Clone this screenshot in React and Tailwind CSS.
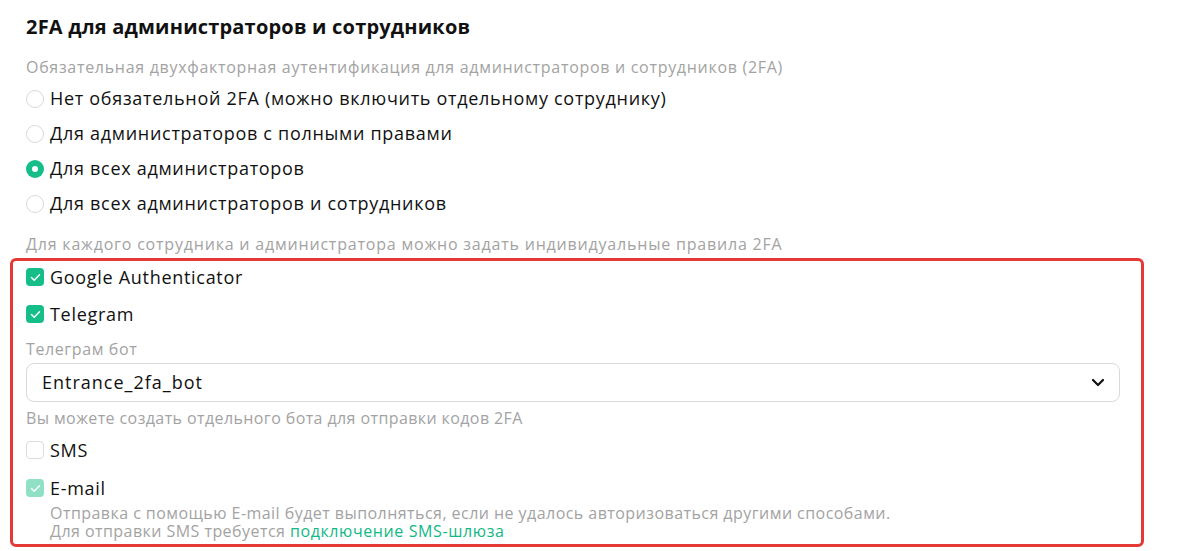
import React from "react";

const F = { fontFamily: '"Open Sans", "Noto Sans", sans-serif' };

function Radio({ checked, label }) {
  return (
    <label className="flex items-center h-[35px] gap-[6px]">
      {checked ? (
        <span className="w-[18px] h-[18px] rounded-full bg-[#15bd88] flex items-center justify-center">
          <span className="w-[6px] h-[6px] rounded-full bg-white" />
        </span>
      ) : (
        <span className="w-[18px] h-[18px] rounded-full border border-[#d9d9d9] bg-white" />
      )}
      <span className="text-[18px] tracking-[0.7px] text-[#111]">{label}</span>
    </label>
  );
}

function Check({ state, label }) {
  let box;
  if (state === "on" || state === "dim") {
    box = (
      <span
        className={
          "w-[18px] h-[18px] rounded-[4px] flex items-center justify-center " +
          (state === "on" ? "bg-[#15bd88]" : "bg-[#8fe0c4]")
        }
      >
        <svg width="11" height="9" viewBox="0 0 11 9" fill="none">
          <path d="M1.5 4.5L4.2 7.2L9.5 1.8" stroke="white" strokeWidth="1.5" strokeLinecap="round" strokeLinejoin="round" />
        </svg>
      </span>
    );
  } else {
    box = <span className="w-[18px] h-[18px] rounded-[4px] border border-[#dcdcdc] bg-white" />;
  }
  return (
    <label className="flex items-center gap-[6px]">
      {box}
      <span className="text-[18px] tracking-[0.7px] text-[#111]">{label}</span>
    </label>
  );
}

export default function App() {
  return (
    <div className="w-[1199px] h-[551px] bg-white overflow-hidden" style={F}>
      <div className="pl-[26px] pt-[13px]">
        <h1 className="text-[20px] tracking-[0.2px] font-bold text-[#111] leading-[28px]">
          2FA для администраторов и сотрудников
        </h1>
        <p className="mt-[15px] text-[16px] tracking-[0.7px] text-[#a3a3a3] leading-[22px]">
          Обязательная двухфакторная аутентификация для администраторов и сотрудников (2FA)
        </p>
        <div className="mt-[3px] flex flex-col">
          <Radio label="Нет обязательной 2FA (можно включить отдельному сотруднику)" />
          <Radio label="Для администраторов с полными правами" />
          <Radio checked label="Для всех администраторов" />
          <Radio label="Для всех администраторов и сотрудников" />
        </div>
        <p className="mt-[12px] text-[16px] tracking-[0.8px] text-[#a3a3a3] leading-[22px]">
          Для каждого сотрудника и администратора можно задать индивидуальные правила 2FA
        </p>
      </div>
      <div className="ml-[10px] mt-[3px] w-[1134px] h-[289px] border-[3px] border-[#e53935] rounded-[6px] pl-[13px] pr-[21px]">
        <div className="h-[32px] flex items-center">
          <Check state="on" label="Google Authenticator" />
        </div>
        <div className="h-[42px] flex items-center">
          <Check state="on" label="Telegram" />
        </div>
        <p className="mt-[2px] text-[16px] tracking-[0.6px] text-[#a3a3a3] leading-[24px]">Телеграм бот</p>
        <div className="mt-[2px] h-[39px] border border-[#d9d9d9] rounded-[8px] flex items-center justify-between pl-[15px] pr-[14px]">
          <span className="text-[18px] tracking-[1px] text-[#111]">Entrance_2fa_bot</span>
          <svg width="14" height="9" viewBox="0 0 14 9" fill="none">
            <path d="M2 2L7 7L12 2" stroke="#111" strokeWidth="2.2" strokeLinecap="round" strokeLinejoin="round" />
          </svg>
        </div>
        <p className="mt-[5px] text-[16px] tracking-[0.4px] text-[#a3a3a3] leading-[22px]">
          Вы можете создать отдельного бота для отправки кодов 2FA
        </p>
        <div className="mt-[7px] h-[28px] flex items-center">
          <Check state="off" label="SMS" />
        </div>
        <div className="mt-[10px] h-[28px] flex items-center">
          <Check state="dim" label="E-mail" />
        </div>
        <div className="mt-[2px] pl-[24px] text-[16px] tracking-[0.45px] leading-[18px] text-[#a3a3a3]">
          <p>Отправка с помощью E-mail будет выполняться, если не удалось авторизоваться другими способами.</p>
          <p>
            Для отправки SMS требуется <span className="text-[#12b886] tracking-[0.6px]">подключение SMS-шлюза</span>
          </p>
        </div>
      </div>
    </div>
  );
}
